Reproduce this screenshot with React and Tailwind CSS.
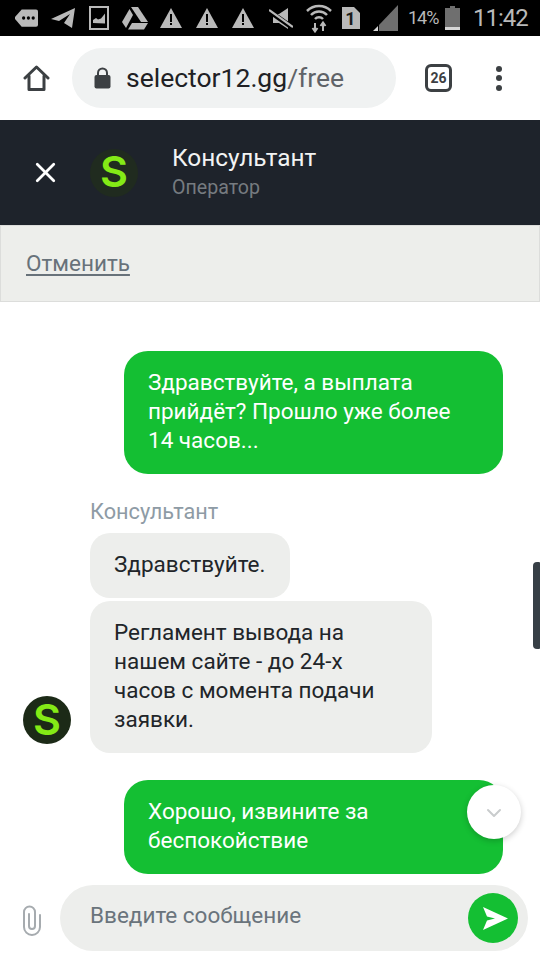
import { X, ChevronDown } from 'lucide-react';

const font = "font-['Roboto',sans-serif]";

function StatusBar() {
    return (
        <div className="h-9 bg-black flex items-center pl-[15px] text-[#b9b9b9] shrink-0">
            {/* tag */}
            <svg width="23" height="20" viewBox="0 0 24 20" fill="#b9b9b9">
                <path d="M7 1h15a2 2 0 0 1 2 2v14a2 2 0 0 1-2 2H7L0 11V9z" />
                <circle cx="9" cy="10" r="1.700" fill="#000" />
                <circle cx="14" cy="10" r="1.700" fill="#000" />
                <circle cx="19" cy="10" r="1.700" fill="#000" />
            </svg>
            {/* telegram */}
            <svg width="24" height="22" viewBox="0 0 24 22" fill="#b9b9b9" className="ml-[13px]">
                <path d="M0 12 24 1l-3 20-8-5 6-9-11 7z" />
            </svg>
            {/* gallery */}
            <svg width="20" height="24" viewBox="0 0 20 24" fill="none" className="ml-[14px]">
                <rect x="1" y="1" width="18" height="22" stroke="#b9b9b9" strokeWidth="2" />
                <path d="M4 17v-3l3-2 2 1.500 3-1 4-5v10z" fill="#b9b9b9" />
            </svg>
            {/* drive */}
            <svg width="26" height="23" viewBox="0 0 26 23" fill="#b9b9b9" className="ml-[13px]">
                <path d="M9 0h7l10 15h-7z" />
                <path d="M7.500 2 11 8 4 21 0 15z" />
                <path d="M10 16h16l-4 6.500H6z" />
            </svg>
            <Warning className="ml-[12px]" />
            <Warning className="ml-[14px]" />
            <Warning className="ml-[14px]" />
            {/* muted */}
            <svg width="24" height="23" viewBox="0 0 24 23" className="ml-[15px]">
                <path d="M19 1v21l-9-6H4V7h6z" fill="#b9b9b9" />
                <path d="M0 4 24 21" stroke="#000" strokeWidth="5" />
                <path d="M0 3 24 20" stroke="#b9b9b9" strokeWidth="2.200" />
            </svg>
            {/* wifi */}
            <svg width="26" height="30" viewBox="0 0 26 30" fill="none" stroke="#b9b9b9" strokeWidth="2" className="ml-[13px]">
                <path d="M1 8a17 17 0 0 1 24 0" strokeWidth="2.500" />
                <path d="M5 12a11 11 0 0 1 16 0" strokeWidth="2.500" />
                <path d="M9 16a5.500 5.500 0 0 1 8 0" strokeWidth="2.500" />
                <path d="M9 20v8M6.500 25 9 28.500l2.500-3.500M17 28v-8M14.500 23 17 19.500l2.500 3.500" />
            </svg>
            {/* sim */}
            <svg width="18" height="24" viewBox="0 0 18 24" className="ml-[10px]">
                <path d="M0 1h12l6 6v16H0z" fill="#b9b9b9" />
                <text x="8.500" y="19" fontSize="18" fontWeight="700" textAnchor="middle" fill="#1c1c1c" fontFamily="Roboto">1</text>
            </svg>
            {/* signal */}
            <svg width="25" height="26" viewBox="0 0 25 26" className="ml-[13px]">
                <path d="M0 26 5 21v5z" fill="#d6d6d6" />
                <path d="M6 20 25 0v26H6z" fill="#6f6f6f" />
            </svg>
            <span className={`${font} text-[18px] ml-[10px] w-[31px] leading-none tracking-[-1px] whitespace-nowrap`}>14%</span>
            {/* battery */}
            <svg width="15" height="24" viewBox="0 0 15 24" className="ml-[6px]">
                <path d="M5 0h5v2h5v22H0V2h5z" fill="#6f6f6f" />
                <rect x="0" y="21" width="15" height="3" fill="#d6d6d6" />
            </svg>
            <span className={`${font} text-[24px] ml-[13px] leading-none tracking-[-1px] whitespace-nowrap`}>11:42</span>
        </div>
    );
}

function Warning({ className }) {
    return (
        <svg width="22" height="20" viewBox="0 0 22 20" className={className}>
            <path d="M11 0 22 20H0z" fill="#b9b9b9" />
            <rect x="10" y="6" width="2" height="8" fill="#000" />
            <rect x="10" y="15" width="2" height="2" fill="#000" />
        </svg>
    );
}

function BrowserBar() {
    return (
        <div className="h-[84px] bg-white flex items-center shrink-0 pl-[23px]">
            <svg width="27" height="27" viewBox="0 0 27 27" fill="none" stroke="#3c4043" strokeWidth="3" strokeLinejoin="round" strokeLinecap="round">
                <path d="M2 13 13.500 2 25 13" />
                <path d="M6 11v13.500h15V11" />
            </svg>
            <div className="ml-[22px] w-[324px] h-[60px] rounded-full bg-[#f0f2f2] flex items-center pl-[22px]">
                <svg width="17" height="22" viewBox="0 0 17 22" fill="#3c4043">
                    <path d="M3 9V6a5.500 5.500 0 0 1 11 0v3h-2V6a3.500 3.500 0 0 0-7 0v3z" />
                    <rect x="0.500" y="8" width="16" height="13.500" rx="2" />
                </svg>
                <span className="ml-[15px] text-[26.5px] leading-none text-[#202124]">
                    selector12.gg<span className="text-[#5f6368]">/free</span>
                </span>
            </div>
            <div className="ml-[29px] w-[27px] h-[28px] border-[3px] border-[#3c4043] rounded-[6px] flex items-center justify-center text-[14px] font-bold text-[#3c4043]">
                26
            </div>
            <div className="ml-[44px] flex flex-col gap-[3.5px]">
                <span className="w-[6px] h-[6px] rounded-full bg-[#3c4043]" />
                <span className="w-[6px] h-[6px] rounded-full bg-[#3c4043]" />
                <span className="w-[6px] h-[6px] rounded-full bg-[#3c4043]" />
            </div>
        </div>
    );
}

function Avatar({ className }) {
    return (
        <div className={`w-12 h-12 rounded-full flex items-center justify-center text-[#84ea16] font-['Inter',sans-serif] font-semibold text-[43px] leading-none shrink-0 pb-[2px] ${className}`}>
            S
        </div>
    );
}

function Header() {
    return (
        <div className="h-[105px] bg-[#1e232b] flex items-center shrink-0 pl-[29px]">
            <X size={33} strokeWidth={2} color="#fff" />
            <Avatar className="ml-[28px] bg-[#202b1f]" />
            <div className="ml-[34px]">
                <div className="text-[24.4px] leading-[30px] text-[#f2f3f3]">Консультант</div>
                <div className="text-[19.6px] leading-[30px] text-[#767b80]">Оператор</div>
            </div>
        </div>
    );
}

function Mine({ children, className }) {
    return (
        <div className={`self-end w-[379px] mr-[37px] bg-[#14bf33] rounded-[24px] px-6 text-[22.5px] leading-[29px] text-white ${className}`}>
            {children}
        </div>
    );
}

function Theirs({ children, className }) {
    return (
        <div className={`bg-[#edeeec] rounded-[20px] px-6 text-[22.5px] leading-[29px] text-[#212529] ${className}`}>
            {children}
        </div>
    );
}

export default function App() {
    return (
        <div className={`w-[540px] h-[960px] bg-white flex flex-col overflow-hidden relative ${font}`}>
            <StatusBar />
            <BrowserBar />
            <Header />

            {/* Cancel band */}
            <div className="h-[77px] bg-[#edeeeb] border border-[#dcdddb] flex items-center pl-[25px] shrink-0">
                <span className="text-[22.5px] text-[#68727a] underline underline-offset-[3px]">Отменить</span>
            </div>

            {/* Messages */}
            <div className="flex-1 flex flex-col pt-[49px] overflow-hidden">
                <Mine className="pt-[17px] pb-[19px]">Здравствуйте, а выплата прийдёт? Прошло уже более 14 часов...</Mine>
                <div className="ml-[90px] mt-[24px] text-[21.7px] leading-[28px] text-[#8e9ba5]">Консультант</div>
                <Theirs className="ml-[90px] mt-[7px] w-[200px] pt-[17px] pb-[19px]">Здравствуйте.</Theirs>
                <div className="flex items-end mt-[3px] pl-[23px]">
                    <Avatar className="mb-[9px] bg-[#1c2a17]" />
                    <Theirs className="ml-[19px] w-[342px] pt-[17px] pb-[19px]">Регламент вывода на нашем сайте - до 24-х часов с момента подачи заявки.</Theirs>
                </div>
                <Mine className="mt-[27px] pt-[17px] pb-[19px]">Хорошо, извините за беспокойствие</Mine>
            </div>

            {/* Input */}
            <div className="h-[85px] flex items-start pt-[10px] pl-[23px] shrink-0 bg-white">
                <svg width="18" height="31" viewBox="0 0 18 31" fill="none" stroke="#a6abaf" strokeWidth="2" strokeLinecap="round" className="mt-[20px]">
                    <path d="M17 10v12a8 8 0 0 1-16 0V7a5.500 5.500 0 0 1 11 0v14a3 3 0 0 1-6 0V9" />
                </svg>
                <div className="ml-[19px] w-[468px] h-[66px] rounded-full bg-[#edeeec] flex items-center pl-[30px] pr-[10px] justify-between">
                    <span className="text-[22.5px] text-[#6a747c] -mt-[5px]">Введите сообщение</span>
                    <div className="w-[50px] h-[50px] rounded-full bg-[#14bf33] flex items-center justify-center">
                        <svg width="25" height="23" viewBox="0 0 25 23" fill="#fff" className="ml-[4px]">
                            <path d="M0 0 25 11.500 0 23l4-9.500 8-2-8-2z" />
                        </svg>
                    </div>
                </div>
            </div>

            {/* Scrollbar */}
            <div className="absolute right-0 top-[562px] w-[7px] h-[87px] bg-[#373f46] rounded-l-[4px] rounded-r-[1px]" />

            {/* Scroll down */}
            <div className="absolute left-[467px] top-[785px] w-[54px] h-[54px] rounded-full bg-white shadow-[0_2px_6px_rgba(0,0,0,0.2)] flex items-center justify-center">
                <ChevronDown size={24} strokeWidth={2} color="#c9cccd" className="mt-[2px]" />
            </div>
        </div>
    );
}
